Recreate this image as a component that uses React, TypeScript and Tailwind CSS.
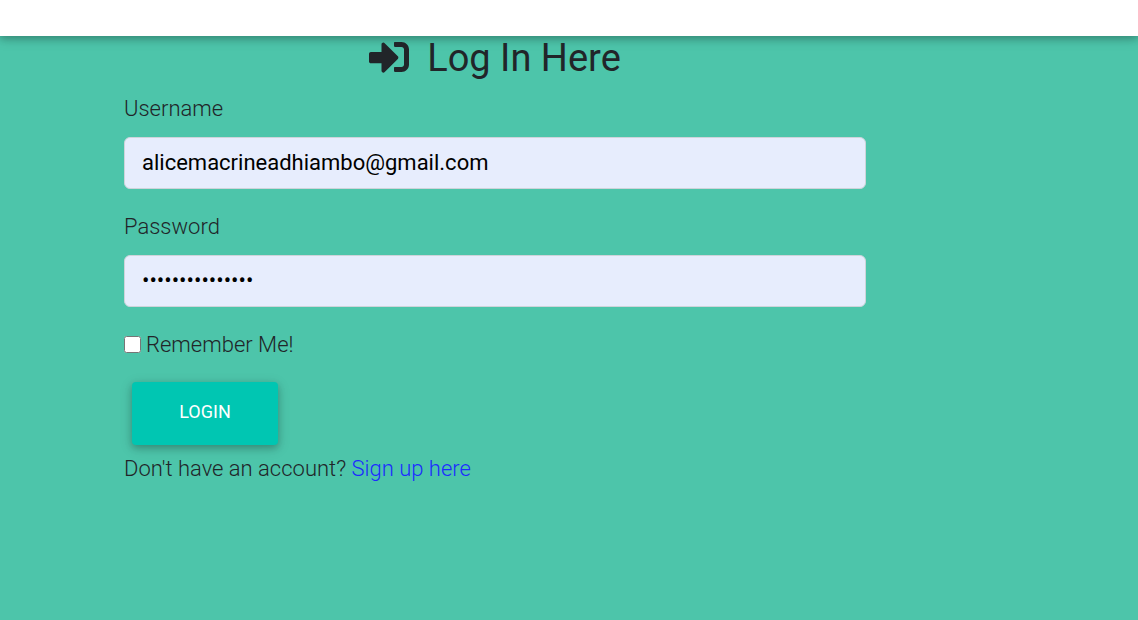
import { FaSignInAlt } from "react-icons/fa";

export default function App() {
  return (
    <div className="flex min-h-screen flex-col bg-[#4dc5aa] font-[Roboto,sans-serif] text-[22px] leading-[34px] font-light text-[#212529]">
      <header className="h-9 bg-white shadow-[0_3px_7px_rgba(0,0,0,0.2),0_3px_14px_rgba(0,0,0,0.14)]" />
      <main className="mr-[272px] ml-[124px]">
        <h1 className="flex items-center justify-center gap-[18px] pt-px text-[38px] leading-[42px] font-normal">
          <FaSignInAlt className="mb-0.5 size-10" aria-hidden="true" />
          Log In Here
        </h1>
        <form>
          <label htmlFor="username" className="mt-[13px] block">Username</label>
          <input
            id="username"
            type="text"
            defaultValue="alicemacrineadhiambo@gmail.com"
            className="mt-[11px] block h-[52px] w-full rounded-md border border-[#ced4da] bg-[#e7edfd] px-[17px] pb-0.5 font-normal text-black outline-none"
          />
          <label htmlFor="password" className="mt-[21px] block">Password</label>
          <input
            id="password"
            type="password"
            defaultValue="fifteenletters1"
            className="mt-[11px] block h-[52px] w-full rounded-md border border-[#ced4da] bg-[#e7edfd] px-[17px] pb-0.5 font-normal text-black outline-none"
          />
          <div className="mt-[21px] flex items-start gap-[5px]">
            <input id="remember" type="checkbox" className="mt-2 size-[17px]" />
            <label htmlFor="remember">Remember Me!</label>
          </div>
          <button
            type="submit"
            className="mt-5 ml-2 block h-[63px] w-[146px] rounded-sm bg-[#00c6b2] pb-1 text-[18px] leading-6 font-normal text-white uppercase shadow-[0_3px_7px_rgba(0,0,0,0.2),0_3px_14px_rgba(0,0,0,0.14)]"
          >
            Login
          </button>
        </form>
        <p className="mt-[7px]">
          Don't have an account? <a href="#signup" className="text-[#1c2cff]">Sign up here</a>
        </p>
      </main>
    </div>
  );
}
